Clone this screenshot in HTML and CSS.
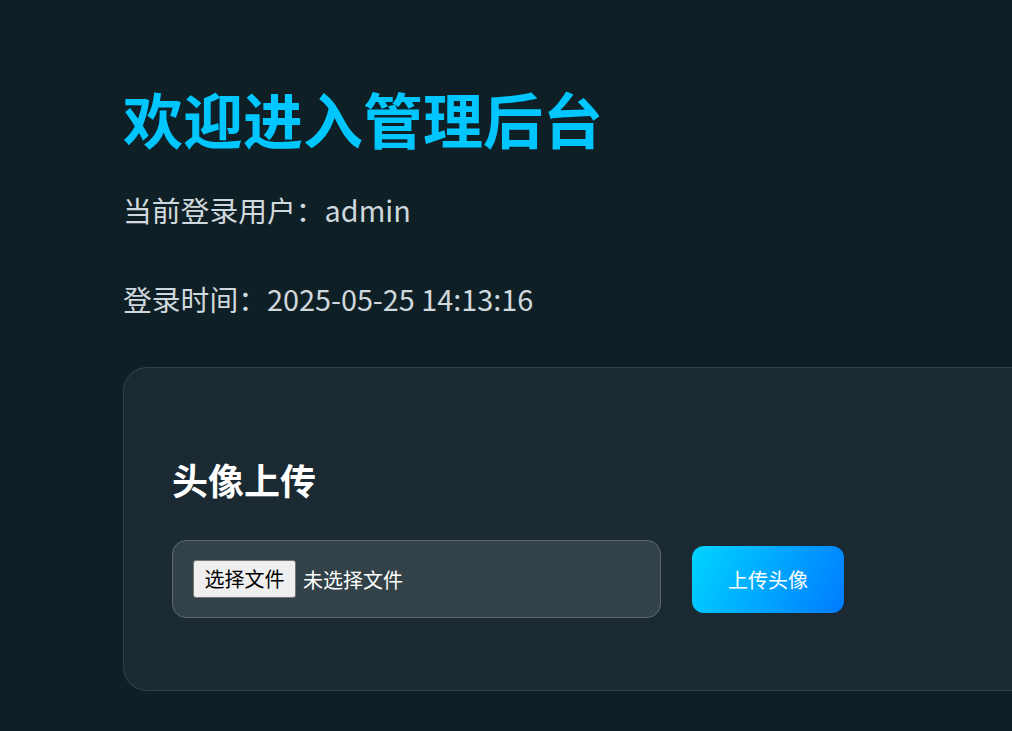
FILE: index.html
```html
<!DOCTYPE html>
<html lang="zh-CN">
<head>
  <meta charset="UTF-8" />
  <meta name="viewport" content="width=device-width, initial-scale=1.0"/>
  <title>管理后台</title>
  <link rel="stylesheet" href="styles.css">
</head>
<body>
  <div class="container">
    <h1>欢迎进入管理后台</h1>
    <p class="info">当前登录用户：admin</p>
    <p class="info">登录时间：2025-05-25 14:13:16</p>

    <div class="card">
      <h2>头像上传</h2>
      <form class="upload-row" onsubmit="return false;">
        <label class="file-box">
          <input type="file" class="file-hidden" accept="image/*" />
          <span class="file-btn">选择文件</span>
          <span class="file-name">未选择文件</span>
        </label>
        <button type="submit" class="upload-btn">上传头像</button>
      </form>
    </div>
  </div>
</body>
</html>
```

FILE: styles.css
```css
:root {
  --bg-color: #0f1f26;
  --card-bg: #1b2a32;
  --input-bg: #334249;
  --primary: #00c6ff;
  --text-color: #cfd8dc;
}

html, body {
  overflow-x: hidden;
}

body {
  font-family: "Noto Sans CJK SC", "Noto Sans", sans-serif;
  background-color: var(--bg-color);
  color: var(--text-color);
  margin: 0;
}

.container {
  padding: 82px 0 40px 123px;
}

h1 {
  margin: 0 0 34px;
  font-size: 60px;
  line-height: 72px;
  font-weight: 700;
  color: var(--primary);
}

.info {
  margin: 0 0 46px;
  font-size: 28.8px;
  line-height: 43px;
}

.card {
  width: 960px;
  margin-top: 47px;
  background: var(--card-bg);
  border: 1px solid rgba(255, 255, 255, 0.1);
  border-radius: 24px;
  padding: 86px 48px 72px;
}

h2 {
  margin: 0 0 36px;
  font-size: 36px;
  line-height: 50px;
  font-weight: 700;
  color: #ffffff;
}

.upload-row {
  display: flex;
  align-items: center;
  gap: 31px;
}

.file-box {
  width: 489px;
  box-sizing: border-box;
  display: flex;
  align-items: center;
  padding: 19px 20px;
  background: var(--input-bg);
  border: 1px solid #5c686e;
  border-radius: 14px;
  cursor: pointer;
}

.file-hidden {
  display: none;
}

.file-btn {
  box-sizing: border-box;
  width: 103px;
  height: 38px;
  line-height: 36px;
  text-align: center;
  background: #efefef;
  color: #000;
  border: 1px solid #767676;
  border-radius: 3px;
  font-size: 20px;
  margin-right: 7px;
}

.file-name {
  color: #ffffff;
  font-size: 20px;
}

.upload-btn {
  width: 152px;
  height: 67px;
  border: none;
  border-radius: 12px;
  background: linear-gradient(115deg, #00d4ff, #007bff);
  color: #ffffff;
  font-family: inherit;
  font-size: 20px;
  cursor: pointer;
}

.upload-btn:hover {
  opacity: 0.9;
}
```
